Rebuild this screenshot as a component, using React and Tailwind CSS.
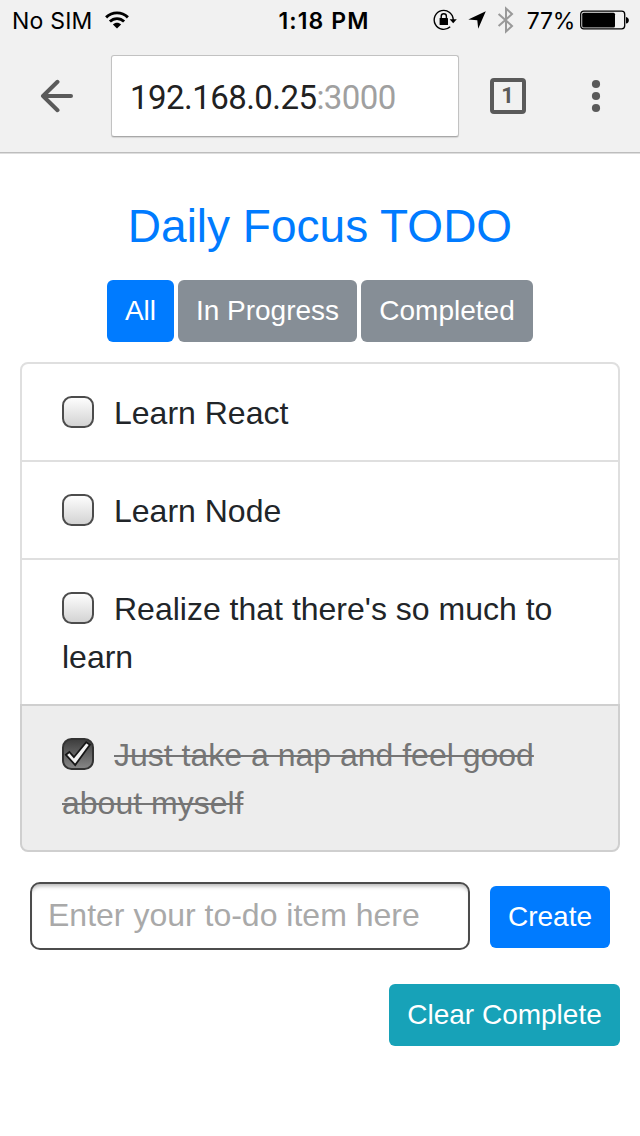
import React from "react";

const todos = [
  { text: "Learn React", done: false },
  { text: "Learn Node", done: false },
  { text: "Realize that there's so much to learn", done: false },
  { text: "Just take a nap and feel good about myself", done: true },
];

function WifiIcon() {
  return (
    <svg className="ml-[12px] h-[18px] w-[24px]" viewBox="0 0 24 18" fill="none" stroke="#000" strokeWidth="2.9">
      <path d="M1.1 6.4C7.3.4 16.7.4 22.9 6.4" />
      <path d="M4.9 10.5c4-3.9 10.2-3.9 14.2 0" />
      <path d="M12 17.4L7.9 13.4c2.3-2.3 5.9-2.3 8.2 0z" fill="#000" stroke="none" />
    </svg>
  );
}

function RotationLockIcon() {
  return (
    <svg className="h-[24px] w-[26px]" viewBox="0 0 26 24" fill="none" stroke="#000">
      <path d="M21.2 12A9.5 9.5 0 1 0 18.2 18.8" strokeWidth="1.4" />
      <path d="M17.6 11.2h7.2l-3.6 4z" fill="#000" stroke="none" />
      <rect x="7.6" y="10" width="8.4" height="7" rx=".6" fill="#000" stroke="none" />
      <path d="M9.2 10.5V8.4a2.6 2.6 0 0 1 5.2 0v2.1" strokeWidth="1.4" />
    </svg>
  );
}

function LocationIcon() {
  return (
    <svg className="ml-[10px] h-[18px] w-[18px]" viewBox="0 0 18 18">
      <path d="M17.8.2L10.2 17.8 9.3 9.2.3 8.6z" fill="#000" />
    </svg>
  );
}

function BluetoothIcon() {
  return (
    <svg className="ml-[11px] h-[28px] w-[18px]" viewBox="0 0 18 28" fill="none" stroke="#999" strokeWidth="2">
      <path d="M1.6 8L15 20 9 25.4V2.6L15 8 1.6 20" />
    </svg>
  );
}

function BatteryIcon() {
  return (
    <svg className="ml-[5px] h-[20px] w-[50px]" viewBox="0 0 50 20">
      <rect x=".7" y="1.2" width="44" height="17.6" rx="3" fill="none" stroke="#000" strokeWidth="1.3" />
      <rect x="2.2" y="2.8" width="32.8" height="14.6" rx="1.5" fill="#000" />
      <path d="M46 7c3.8.7 3.8 6 0 6.6z" fill="#000" />
    </svg>
  );
}

function StatusBar() {
  return (
    <div className="grid h-[40px] grid-cols-[1fr_auto_1fr] items-center whitespace-nowrap font-['Inter',sans-serif] text-[23px] leading-none text-black">
      <div className="flex items-center pl-[12px]">
        <span className="pt-[2px] tracking-[0.2px]">No SIM</span>
        <WifiIcon />
      </div>
      <span className="pl-[8px] pt-[2px] font-semibold tracking-[1.1px]">1:18 PM</span>
      <div className="flex items-center justify-end pr-[10px]">
        <RotationLockIcon />
        <LocationIcon />
        <BluetoothIcon />
        <span className="ml-[12px] pt-[2px] tracking-[-0.3px]">77%</span>
        <BatteryIcon />
      </div>
    </div>
  );
}

function BrowserBar() {
  return (
    <div className="flex h-[112px] items-center text-[#5a5a5a]">
      <svg className="ml-[40px] h-[34px] w-[34px]" viewBox="0 0 34 34" fill="none" stroke="currentColor" strokeWidth="4" strokeLinecap="round" strokeLinejoin="round">
        <path d="M31 17H3M17.5 2.8L3 17l14.5 14.2" />
      </svg>
      <div className="ml-[37px] flex h-[82px] w-[348px] items-center rounded-[3px] border border-[#c2c2c2] border-b-[#a8a8a8] bg-white pl-[18px] pt-[4px] font-['Roboto',sans-serif] text-[33px] tracking-[-0.55px] text-[#212121] shadow-[0_1px_1px_rgba(0,0,0,0.12)]">
        <span>192.168.0.25</span>
        <span className="text-[#a0a0a0]">:3000</span>
      </div>
      <div className="ml-[31px] flex h-[36px] w-[36px] items-center justify-center rounded-[4px] border-4 border-[#5a5a5a] pr-[1px] font-['Roboto',sans-serif] text-[22px] font-bold leading-none">
        1
      </div>
      <svg className="ml-[65px] h-[34px] w-[10px] overflow-visible" viewBox="0 0 10 34" fill="currentColor">
        <circle cx="5" cy="5" r="4.1" />
        <circle cx="5" cy="17" r="4.1" />
        <circle cx="5" cy="29" r="4.1" />
      </svg>
    </div>
  );
}

function Button({ className, children }) {
  return (
    <button className={`flex h-[62px] items-center justify-center whitespace-nowrap rounded-[6px] text-[28px] leading-[42px] text-white ${className}`}>
      {children}
    </button>
  );
}

function Checkbox({ checked }) {
  return (
    <svg className="-mt-[7px] mr-[20px] inline-block h-[32px] w-[32px] align-middle" viewBox="0 0 32 32">
      <defs>
        <linearGradient id="box-off" x1="0" y1="0" x2="0" y2="1">
          <stop offset="0" stopColor="#fff" />
          <stop offset="1" stopColor="#d2d2d2" />
        </linearGradient>
        <linearGradient id="box-on" x1="0" y1="0" x2="0" y2="1">
          <stop offset="0" stopColor="#3c3c3c" />
          <stop offset="1" stopColor="#888" />
        </linearGradient>
      </defs>
      <rect x="1" y="1" width="30" height="30" rx="8.5" fill={checked ? "url(#box-on)" : "url(#box-off)"} stroke={checked ? "#333" : "#4c4c4c"} strokeWidth="2" />
      {checked && (
        <path d="M3.9 16.8L7.4 14l4.5 5.2L24.2 4.2l3.7 2.6L13.2 27z" fill="#f2f2f2" stroke="#161616" strokeWidth="1.8" />
      )}
    </svg>
  );
}

function TodoItem({ text, done }) {
  return (
    <li
      className={
        done
          ? "-mt-[2px] rounded-b-[8px] border-2 border-[#cfcfcf] bg-[#ededed] px-[40px] pb-[23px] pt-[25px] text-[#757575]"
          : "-mt-[2px] border-2 border-[#dfdfdf] bg-white px-[40px] pb-[23px] pt-[25px] text-[#212529] first:mt-0 first:rounded-t-[8px]"
      }
    >
      <Checkbox checked={done} />
      <span className={done ? "line-through decoration-[2px]" : ""}>{text}</span>
    </li>
  );
}

export default function App() {
  return (
    <div className="min-h-[1136px] w-[640px] bg-white font-['Liberation_Sans',Arial,sans-serif]">
      <header className="h-[153px] border-b border-[#bdbdbd] bg-[#f1f1f1] shadow-[0_1px_0_#dedede]">
        <StatusBar />
        <BrowserBar />
      </header>
      <main className="px-[20px] pt-[45px]">
        <h1 className="text-center text-[46px] leading-[56px] text-[#007bff]">Daily Focus TODO</h1>
        <div className="mt-[26px] flex justify-center gap-[4px]">
          <Button className="w-[67px] bg-[#007bff]">All</Button>
          <Button className="w-[179px] bg-[#868e96]">In Progress</Button>
          <Button className="w-[172px] bg-[#868e96]">Completed</Button>
        </div>
        <ul className="mt-[20px] text-[32px] leading-[48px]">
          {todos.map((todo) => (
            <TodoItem key={todo.text} {...todo} />
          ))}
        </ul>
        <div className="mt-[30px] flex items-center justify-between px-[10px]">
          <input
            className="h-[68px] w-[440px] rounded-[10px] border-2 border-[#4c4c4c] bg-white px-[16px] pb-[2px] text-[32px] shadow-[inset_0_5px_4px_-3px_rgba(0,0,0,0.3)] outline-none placeholder:text-[#a9a9a9]"
            placeholder="Enter your to-do item here"
          />
          <Button className="mt-[2px] w-[120px] bg-[#007bff]">Create</Button>
        </div>
        <div className="mt-[34px] flex justify-end">
          <Button className="w-[231px] bg-[#17a2b8]">Clear Complete</Button>
        </div>
      </main>
    </div>
  );
}
